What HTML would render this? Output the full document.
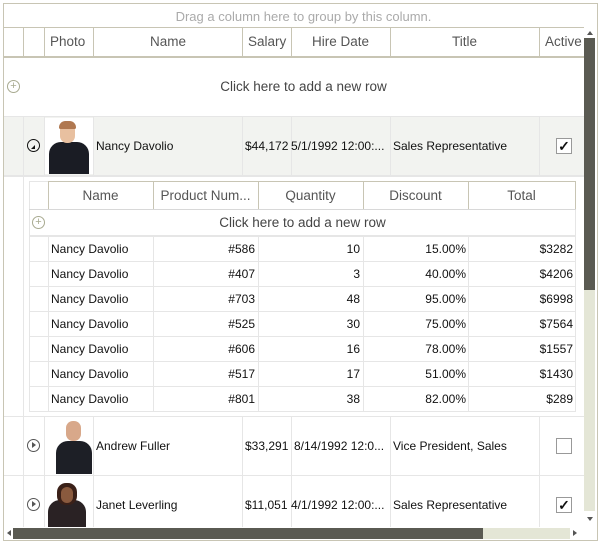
<!DOCTYPE html>
<html><head><style>
*{margin:0;padding:0;box-sizing:border-box}
body{width:607px;height:543px;background:#fff;font-family:"Liberation Sans",sans-serif;position:relative;overflow:hidden;color:#111}
.a{position:absolute}
.t{position:absolute;font-size:12px;white-space:nowrap;line-height:14px}
.h{position:absolute;font-size:13.5px;color:#555;white-space:nowrap;line-height:16px}
.vl{position:absolute;width:1px;background:#c8c5b4}
.gl{position:absolute;background:#e6e6e6}
.r{text-align:right}
</style></head><body>
<!-- outer border -->
<div class="a" style="left:3px;top:3px;width:595px;height:538px;border:1px solid #c8c5b4"></div>
<div class="h" style="left:0;width:607px;top:9px;text-align:center;color:#aaa;font-size:13px">Drag a column here to group by this column.</div>
<div class="a" style="left:4px;top:27px;width:580px;height:1px;background:#c8c5b4"></div>
<!-- header -->
<div class="a" style="left:4px;top:56px;width:580px;height:2px;background:#c8c5b4"></div>
<div class="vl" style="left:23px;top:28px;height:28px"></div>
<div class="vl" style="left:44px;top:28px;height:28px"></div>
<div class="vl" style="left:93px;top:28px;height:28px"></div>
<div class="vl" style="left:242px;top:28px;height:28px"></div>
<div class="vl" style="left:291px;top:28px;height:28px"></div>
<div class="vl" style="left:390px;top:28px;height:28px"></div>
<div class="vl" style="left:539px;top:28px;height:28px"></div>
<div class="h" style="left:50px;top:34px">Photo</div>
<div class="h" style="left:94px;width:148px;top:34px;text-align:center">Name</div>
<div class="h" style="left:248px;top:34px">Salary</div>
<div class="h" style="left:291px;width:99px;top:34px;text-align:center">Hire Date</div>
<div class="h" style="left:390px;width:149px;top:34px;text-align:center">Title</div>
<div class="h" style="left:545px;top:34px">Active</div>
<!-- new row -->
<div class="a" style="left:7px;top:80px;width:13px;height:13px;border:1px solid #a8aa90;border-radius:50%;color:#a8aa90;font-size:11px;line-height:11px;text-align:center">+</div>
<div class="h" style="left:0;width:607px;top:79px;text-align:center;color:#444">Click here to add a new row</div>
<div class="gl" style="left:4px;top:116px;width:580px;height:1px"></div>
<!-- Nancy row -->
<div class="a" style="left:4px;top:117px;width:580px;height:58px;background:#f2f3f0"></div>
<div class="gl" style="left:23px;top:117px;width:1px;height:58px"></div>
<div class="gl" style="left:44px;top:117px;width:1px;height:58px"></div>
<div class="a" style="left:45px;top:118px;width:48px;height:56px;background:#fff"></div>
<div class="a" style="left:49px;top:142px;width:40px;height:32px;background:#1a1c24;border-radius:12px 12px 0 0"></div>
<div class="a" style="left:60px;top:123px;width:15px;height:20px;background:#e8c0a0;border-radius:7px"></div>
<div class="a" style="left:59px;top:121px;width:17px;height:8px;background:#b07850;border-radius:8px 8px 2px 2px"></div>
<div class="gl" style="left:93px;top:117px;width:1px;height:58px"></div>
<div class="gl" style="left:242px;top:117px;width:1px;height:58px"></div>
<div class="gl" style="left:291px;top:117px;width:1px;height:58px"></div>
<div class="gl" style="left:390px;top:117px;width:1px;height:58px"></div>
<div class="gl" style="left:539px;top:117px;width:1px;height:58px"></div>
<div class="a" style="left:27px;top:139px;width:13px;height:13px;border:1.5px solid #111;border-radius:50%"></div>
<div class="a" style="left:31px;top:145px;width:0;height:0;border-left:4px solid transparent;border-bottom:4px solid #111"></div>
<div class="t" style="left:96px;top:139px">Nancy Davolio</div>
<div class="t" style="left:245px;top:139px">$44,172</div>
<div class="t" style="left:291px;top:139px">5/1/1992 12:00:...</div>
<div class="t" style="left:393px;top:139px">Sales Representative</div>
<div class="a" style="left:556px;top:138px;width:16px;height:16px;border:1px solid #999;background:#fff;font-size:14px;line-height:14px;text-align:center;font-weight:bold">✓</div>
<!-- detail area -->
<div class="a" style="left:4px;top:175px;width:580px;height:241px;background:#fff"></div>
<div class="gl" style="left:4px;top:175px;width:580px;height:2px"></div>
<div class="gl" style="left:23px;top:177px;width:1px;height:239px"></div>
<div class="a" style="left:29px;top:181px;width:547px;height:231px;border:1px solid #e6e6e6"></div>
<div class="a" style="left:29px;top:209px;width:547px;height:1px;background:#d8d8d8"></div>
<div class="vl" style="left:48px;top:182px;height:27px"></div>
<div class="vl" style="left:153px;top:182px;height:27px"></div>
<div class="vl" style="left:258px;top:182px;height:27px"></div>
<div class="vl" style="left:363px;top:182px;height:27px"></div>
<div class="vl" style="left:468px;top:182px;height:27px"></div>
<div class="vl" style="left:575px;top:182px;height:27px"></div>
<div class="a" style="left:48px;top:181px;width:528px;height:1px;background:#c8c5b4"></div>
<div class="h" style="left:48px;width:105px;top:188px;text-align:center">Name</div>
<div class="h" style="left:153px;width:105px;top:188px;text-align:center">Product Num...</div>
<div class="h" style="left:258px;width:105px;top:188px;text-align:center">Quantity</div>
<div class="h" style="left:363px;width:105px;top:188px;text-align:center">Discount</div>
<div class="h" style="left:468px;width:107px;top:188px;text-align:center">Total</div>
<div class="a" style="left:32px;top:216px;width:13px;height:13px;border:1px solid #a8aa90;border-radius:50%;color:#a8aa90;font-size:11px;line-height:11px;text-align:center">+</div>
<div class="h" style="left:29px;width:547px;top:215px;text-align:center;color:#444">Click here to add a new row</div>
<div class="gl" style="left:30px;top:235px;width:545px;height:2px"></div>
<div id="rows"></div>
<!-- Andrew row -->
<div class="gl" style="left:4px;top:416px;width:580px;height:1px"></div>
<div class="gl" style="left:4px;top:475px;width:580px;height:1px"></div>
<div class="gl" style="left:23px;top:417px;width:1px;height:110px"></div>
<div class="gl" style="left:44px;top:417px;width:1px;height:110px"></div>
<div class="gl" style="left:93px;top:417px;width:1px;height:110px"></div>
<div class="gl" style="left:242px;top:417px;width:1px;height:110px"></div>
<div class="gl" style="left:291px;top:417px;width:1px;height:110px"></div>
<div class="gl" style="left:390px;top:417px;width:1px;height:110px"></div>
<div class="gl" style="left:539px;top:417px;width:1px;height:110px"></div>
<div class="a" style="left:27px;top:439px;width:13px;height:13px;border:1px solid #555;border-radius:50%"></div>
<div class="a" style="left:32px;top:442px;border-top:3.5px solid transparent;border-bottom:3.5px solid transparent;border-left:4px solid #555"></div>
<div class="a" style="left:56px;top:441px;width:36px;height:33px;background:#1d1f26;border-radius:12px 12px 0 0"></div>
<div class="a" style="left:66px;top:421px;width:15px;height:20px;background:#d8a88a;border-radius:7px"></div>
<div class="t" style="left:96px;top:439px">Andrew Fuller</div>
<div class="t" style="left:245px;top:439px">$33,291</div>
<div class="t" style="left:294px;top:439px">8/14/1992 12:0...</div>
<div class="t" style="left:393px;top:439px">Vice President, Sales</div>
<div class="a" style="left:556px;top:438px;width:16px;height:16px;border:1px solid #999"></div>
<!-- Janet -->
<div class="a" style="left:27px;top:498px;width:13px;height:13px;border:1px solid #555;border-radius:50%"></div>
<div class="a" style="left:32px;top:501px;border-top:3.5px solid transparent;border-bottom:3.5px solid transparent;border-left:4px solid #555"></div>
<div class="a" style="left:48px;top:500px;width:38px;height:27px;background:#2a2224;border-radius:12px 12px 0 0"></div>
<div class="a" style="left:57px;top:483px;width:20px;height:22px;background:#3a2018;border-radius:9px"></div>
<div class="a" style="left:61px;top:487px;width:12px;height:16px;background:#8a5a3e;border-radius:6px"></div>
<div class="t" style="left:96px;top:498px">Janet Leverling</div>
<div class="t" style="left:245px;top:498px">$11,051</div>
<div class="t" style="left:291px;top:498px">4/1/1992 12:00:...</div>
<div class="t" style="left:393px;top:498px">Sales Representative</div>
<div class="a" style="left:556px;top:497px;width:16px;height:16px;border:1px solid #999;font-size:14px;line-height:14px;text-align:center;font-weight:bold">✓</div>
<!-- vertical scrollbar -->
<div class="a" style="left:584px;top:28px;width:13px;height:500px;background:#fff"></div>
<div class="a" style="left:587px;top:31px;border-left:3.5px solid transparent;border-right:3.5px solid transparent;border-bottom:4px solid #555"></div>
<div class="a" style="left:584px;top:38px;width:11px;height:252px;background:#5a5a52"></div>
<div class="a" style="left:584px;top:290px;width:11px;height:221px;background:#e4e6d6"></div>
<div class="a" style="left:587px;top:517px;border-left:3.5px solid transparent;border-right:3.5px solid transparent;border-top:4px solid #555"></div>
<!-- horizontal scrollbar -->
<div class="a" style="left:4px;top:527px;width:580px;height:13px;background:#fff"></div>
<div class="a" style="left:7px;top:530px;border-top:3.5px solid transparent;border-bottom:3.5px solid transparent;border-right:4px solid #555"></div>
<div class="a" style="left:13px;top:528px;width:470px;height:11px;background:#5a5a52"></div>
<div class="a" style="left:483px;top:528px;width:87px;height:11px;background:#e4e6d6"></div>
<div class="a" style="left:573px;top:530px;border-top:3.5px solid transparent;border-bottom:3.5px solid transparent;border-left:4px solid #555"></div>
<script>
var d=[["#586",10,"15.00%","$3282"],["#407",3,"40.00%","$4206"],["#703",48,"95.00%","$6998"],["#525",30,"75.00%","$7564"],["#606",16,"78.00%","$1557"],["#517",17,"51.00%","$1430"],["#801",38,"82.00%","$289"]];
var h="";
for(var i=0;i<7;i++){var y=237+i*25;
h+='<div class="gl" style="left:30px;top:'+(y+24)+'px;width:545px;height:1px"></div>';
[48,153,258,363,468].forEach(function(x){h+='<div class="gl" style="left:'+x+'px;top:'+y+'px;width:1px;height:25px"></div>'});
h+='<div class="t" style="left:51px;top:'+(y+5)+'px">Nancy Davolio</div>';
h+='<div class="t r" style="left:153px;width:102px;top:'+(y+5)+'px">'+d[i][0]+'</div>';
h+='<div class="t r" style="left:258px;width:102px;top:'+(y+5)+'px">'+d[i][1]+'</div>';
h+='<div class="t r" style="left:363px;width:103px;top:'+(y+5)+'px">'+d[i][2]+'</div>';
h+='<div class="t r" style="left:468px;width:105px;top:'+(y+5)+'px">'+d[i][3]+'</div>';}
document.getElementById("rows").outerHTML=h;
</script>
</body></html>
